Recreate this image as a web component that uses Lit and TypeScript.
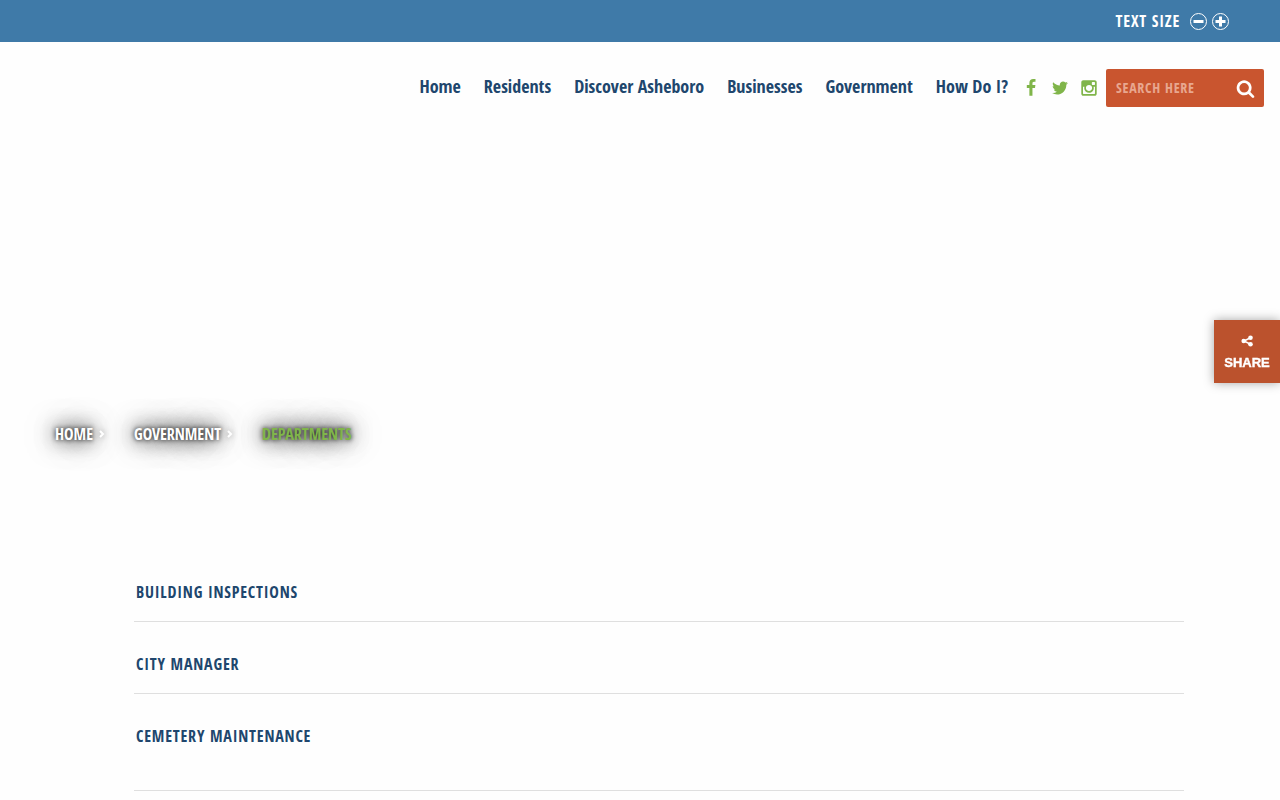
import { LitElement, html, css, svg } from "lit";
import { customElement } from "lit/decorators.js";

const SOCIAL = [
  {
    name: "Facebook",
    path: svg`<path d="M1343 12v264h-157q-86 0-116 36t-30 108v189h293l-39 296h-254v759H734V905H479V609h255V391q0-186 104-288.500T1115 0q147 0 228 12z"/>`,
  },
  {
    name: "Twitter",
    path: svg`<path d="M1684 408q-67 98-162 167 1 14 1 42 0 130-38 259.500T1369.500 1125 1185 1335.500t-258 146-323 54.500q-271 0-496-145 35 4 78 4 225 0 401-138-105-2-188-64.500T285 1033q33 5 61 5 43 0 85-11-112-23-185.500-111.500T172 710v-4q68 38 146 41-66-44-105-115t-39-154q0-88 44-163 121 149 294.500 238.500T884 653q-8-38-8-74 0-134 94.500-228.500T1199 256q140 0 236 102 109-21 205-78-37 115-142 178 93-10 186-50z"/>`,
  },
  {
    name: "Instagram",
    path: svg`<path d="M1490 1426V778h-135q20 63 20 131 0 126-64 232.500T1137 1310t-240 62q-197 0-337-135.500T420 909q0-68 20-131H299v648q0 26 17.500 43.500T360 1487h1069q25 0 43-17.500t18-43.500zm-284-533q0-124-90.500-211.500T897 594q-127 0-217.500 87.500T589 893t90.500 211.500T897 1192q128 0 218.500-87.500T1206 893zm284-360V368q0-28-20-48.500t-49-20.500h-174q-29 0-49 20.500t-20 48.500v165q0 29 20 49t49 20h174q29 0 49-20t20-49zm174-208v1142q0 81-58 139t-139 58H325q-81 0-139-58t-58-139V325q0-81 58-139t139-58h1142q81 0 139 58t58 139z"/>`,
  },
];

const NAV = ["Home", "Residents", "Discover Asheboro", "Businesses", "Government", "How Do I?"];
const TRAIL = ["Home", "Government"];
const DEPARTMENTS = ["Building Inspections", "City Manager", "Cemetery Maintenance"];

@customElement("app-root")
export class AppRoot extends LitElement {
  static styles = css`
    :host {
      display: block;
      min-height: 100vh;
      background: #fefefe;
      color: #20466d;
      font-family: "Open Sans Condensed", "Liberation Sans Narrow", sans-serif;
      font-weight: 700;
    }
    * { box-sizing: border-box; }
    a { color: inherit; text-decoration: none; }
    button { border: 0; padding: 0; background: none; color: inherit; font: inherit; cursor: pointer; }
    svg { display: block; }
    ul, ol { list-style: none; margin: 0; padding: 0; }

    .topbar {
      display: flex;
      align-items: center;
      justify-content: flex-end;
      gap: 5px;
      height: 42px;
      padding-right: 51px;
      background: #3f7aa8;
      color: #fff;
      font-size: 16px;
      letter-spacing: 0.05em;
      text-transform: uppercase;
    }
    .topbar span { margin-right: 5px; }

    .header {
      display: flex;
      align-items: center;
      justify-content: flex-end;
      padding: 27px 16px 0 0;
    }
    .nav ul { display: flex; gap: 23px; font-size: 18px; line-height: 24px; white-space: nowrap; }
    .nav { padding-bottom: 4px; }
    .social { display: flex; align-items: center; gap: 11px; margin-left: 14px; padding-right: 8px; color: #80b54a; }
    .social svg { width: 18px; height: 18px; fill: currentColor; }
    .search {
      display: flex;
      align-items: center;
      width: 158px;
      height: 38px;
      padding: 0 9px 0 10px;
      border-radius: 2px;
      background: #c9552f;
      color: #fff;
    }
    .search input {
      flex: 1;
      min-width: 0;
      padding: 0 0 2px;
      border: 0;
      outline: 0;
      background: none;
      color: #fff;
      font: inherit;
      font-size: 14px;
      letter-spacing: 0.05em;
      text-transform: uppercase;
    }
    .search input::placeholder { color: #e8a78f; opacity: 1; }
    .search svg { fill: currentColor; }

    .crumbs { padding: 315px 55px 0; }
    .crumbs ol { display: flex; gap: 30px; font-size: 16px; line-height: 24px; text-transform: uppercase; }
    .crumbs li {
      display: flex;
      align-items: center;
      gap: 6px;
      color: #fff;
      text-shadow: 0 0 5px #000, 0 0 20px #000, 0 0 30px #777;
    }
    .crumbs .current { color: #80b54a; }
    .crumbs svg { filter: drop-shadow(0 0 3px rgba(0, 0, 0, 0.4)); overflow: visible; }

    .list { padding: 116px 96px 0 134px; font-size: 16px; letter-spacing: 0.05em; text-transform: uppercase; }
    .list li { padding: 18px 2px 17px; line-height: 24px; border-bottom: 1px solid #dfdfdf; }
    .list li + li { padding-top: 30px; }
    .list li:last-child { padding-bottom: 42px; }

    .share {
      position: fixed;
      top: 320px;
      right: 0;
      display: flex;
      flex-direction: column;
      align-items: center;
      gap: 8px;
      width: 66px;
      height: 63px;
      padding-top: 15px;
      background: #bb522d;
      color: #fff;
      box-shadow: 0 0 10px rgba(0, 0, 0, 0.35);
      font: 900 13px/16px "Liberation Sans", sans-serif;
      -webkit-text-stroke: 0.03em #fff;
      text-transform: uppercase;
    }
  `;

  render() {
    return html`
      <div class="topbar">
        <span>Text Size</span>
        <button aria-label="Decrease text size">
          <svg width="17" height="17" viewBox="0 0 17 17" fill="none" stroke="#fff">
            <circle cx="8.500" cy="8.500" r="8"/><path d="M3.500 8.500h10" stroke-width="3"/>
          </svg>
        </button>
        <button aria-label="Increase text size">
          <svg width="17" height="17" viewBox="0 0 17 17" fill="none" stroke="#fff">
            <circle cx="8.500" cy="8.500" r="8"/><path d="M3.500 8.500h10M8.500 3.500v10" stroke-width="3"/>
          </svg>
        </button>
      </div>
      <header class="header">
        <nav class="nav" aria-label="Main">
          <ul>${NAV.map((n) => html`<li><a href="#">${n}</a></li>`)}</ul>
        </nav>
        <div class="social">
          ${SOCIAL.map((s) => html`<a href="#" aria-label=${s.name}><svg viewBox="0 0 1792 1792">${s.path}</svg></a>`)}
        </div>
        <form class="search" role="search">
          <input type="text" aria-label="Search" placeholder="Search here" />
          <button type="button" aria-label="Submit search">
            <svg width="19" height="19" viewBox="0 0 1792 1792"><path d="M1216 832q0-185-131.500-316.500T768 384 451.500 515.500 320 832t131.500 316.500T768 1280t316.500-131.500T1216 832zm512 832q0 52-38 90t-90 38q-54 0-90-38l-343-342q-179 124-399 124-143 0-273.500-55.500t-225-150-150-225T64 832t55.500-273.500 150-225 225-150T768 128t273.500 55.500 225 150 150 225T1472 832q0 220-124 399l343 343q37 37 37 90z"/></svg>
          </button>
        </form>
      </header>
      <nav class="crumbs" aria-label="Breadcrumb">
        <ol>
          ${TRAIL.map(
            (t) => html`<li>
              <a href="#">${t}</a>
              <svg width="5" height="8" viewBox="0 0 5 8" fill="none" stroke="#fff" stroke-width="2"><path d="M1 1l3 3-3 3"/></svg>
            </li>`
          )}
          <li class="current" aria-current="page">Departments</li>
        </ol>
      </nav>
      <main>
        <ul class="list">${DEPARTMENTS.map((d) => html`<li><a href="#">${d}</a></li>`)}</ul>
      </main>
      <button class="share">
        <svg width="12" height="12" viewBox="0 0 12 12" fill="#fff">
          <path d="M9 3 3 6l6 3" fill="none" stroke="#fff" stroke-width="1.500"/>
          <circle cx="9.500" cy="2.700" r="2.300"/><circle cx="2.700" cy="6" r="2.300"/><circle cx="9.500" cy="9.300" r="2.300"/>
        </svg>
        <span>Share</span>
      </button>
    `;
  }
}
